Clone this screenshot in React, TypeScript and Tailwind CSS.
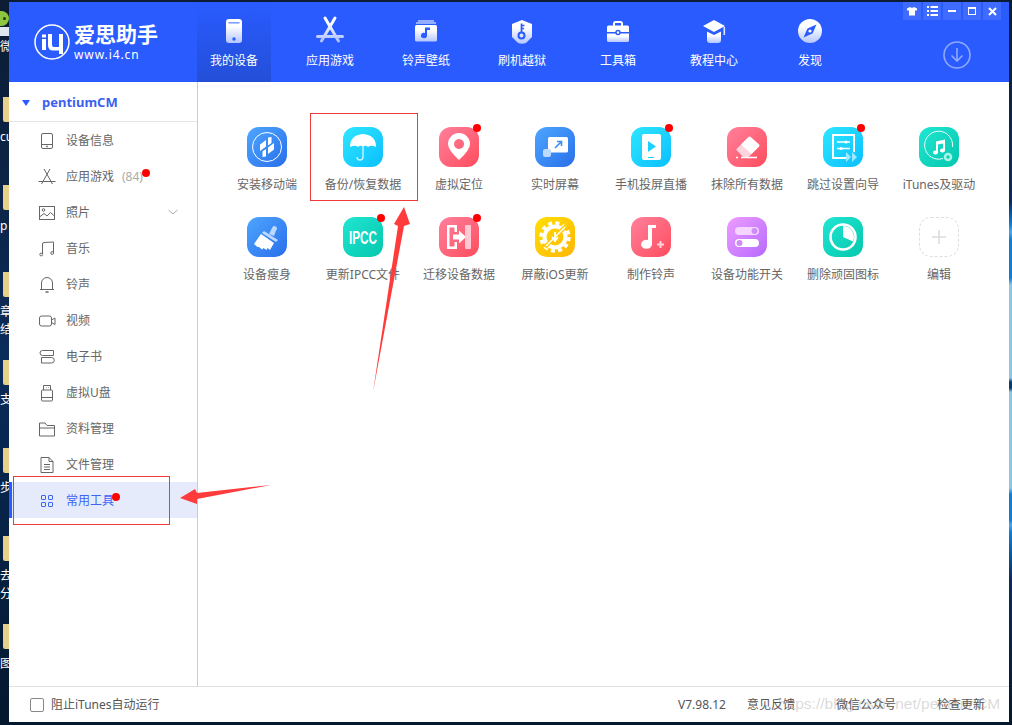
import React from 'react';

const font = { fontFamily: '"Noto Sans", "Noto Sans CJK SC", sans-serif' };

const navItems: { label: string; icon: React.ReactNode }[] = [
  {
    label: '我的设备',
    icon: (
      <>
        <rect x="8" y="4" width="16" height="24" rx="3" fill="url(#navg)" />
        <rect x="10.5" y="7" width="11" height="1.6" fill="#2a5bff" opacity="0.6" />
        <circle cx="16" cy="24" r="1.7" fill="#2a5bff" />
      </>
    ),
  },
  {
    label: '应用游戏',
    icon: (
      <g stroke="url(#navs)" strokeWidth="3" fill="none" strokeLinecap="round">
        <path d="M11 3 L24.5 26" />
        <path d="M21 3 L7.5 26" />
        <path d="M3.5 21.5 H28.5" />
      </g>
    ),
  },
  {
    label: '铃声壁纸',
    icon: (
      <>
        <path d="M8 6 H24 M6 8 H26" stroke="#fff" strokeWidth="1" />
        <rect x="5" y="10" width="22" height="16.5" rx="1.5" fill="url(#navg)" />
        <path d="M17 12.5 V20.5 a3 2.6 0 1 1 -2 -2.4 V12.5 H20 V15 H17z" fill="#2a5bff" />
      </>
    ),
  },
  {
    label: '刷机越狱',
    icon: (
      <>
        <path d="M16 5 L26 9 V22 L20 28 Q16 29.5 12 28 L6 22 V9z" fill="url(#navg)" />
        <circle cx="15.5" cy="20.5" r="3" fill="none" stroke="#2a5bff" strokeWidth="2" />
        <path d="M15.5 17 V8.5 M15.5 10.5 H18.5 M15.5 13.5 H18" stroke="#2a5bff" strokeWidth="1.7" />
      </>
    ),
  },
  {
    label: '工具箱',
    icon: (
      <>
        <path d="M12 11 V8.5 a1.5 1.5 0 0 1 1.5 -1.5 h5 a1.5 1.5 0 0 1 1.5 1.5 V11" fill="none" stroke="#fff" strokeWidth="2" />
        <path d="M5 12 a1.5 1.5 0 0 1 1.5 -1.5 h19 a1.5 1.5 0 0 1 1.5 1.5 V17 H5z" fill="#fff" />
        <path d="M5 18.5 H27 V25.5 a1.5 1.5 0 0 1 -1.5 1.5 h-19 a1.5 1.5 0 0 1 -1.5 -1.5z" fill="url(#navg)" />
        <circle cx="16" cy="17.5" r="2" fill="#fff" stroke="#2a5bff" strokeWidth="1.4" />
      </>
    ),
  },
  {
    label: '教程中心',
    icon: (
      <>
        <path d="M16 5 L27 11 L16 17 L5 11z" fill="#fff" />
        <path d="M9 16.5 L16 20 L23 16.5 V25 Q23 28 20 28 H12 Q9 28 9 25z" fill="url(#navg)" />
        <rect x="25.5" y="12" width="1.6" height="8" fill="#dfe6ff" />
      </>
    ),
  },
  {
    label: '发现',
    icon: (
      <>
        <circle cx="16" cy="16" r="12" fill="url(#navg)" />
        <path d="M22.5 9.5 L18.5 18.5 L9.5 22.5 L13.5 13.5z" fill="#2a5bff" />
        <circle cx="16" cy="16" r="1.6" fill="#fff" />
      </>
    ),
  },
];

const line = { fill: 'none', stroke: 'currentColor', strokeWidth: 1 };

const sideItems: { label: string; icon: React.ReactNode; extra?: React.ReactNode }[] = [
  {
    label: '设备信息',
    icon: (
      <g {...line}>
        <rect x="3.5" y="1.5" width="11" height="15" rx="1.5" />
        <path d="M3.5 12.5 H14.5" />
        <circle cx="9" cy="14.5" r="0.6" />
      </g>
    ),
  },
  {
    label: '应用游戏',
    icon: (
      <g {...line}>
        <path d="M6 1 L14.5 16 M12 1 L3.5 16 M0.5 13.5 H17.5" />
      </g>
    ),
    extra: (
      <>
        <span className="ml-2 text-[#aaaaaa]">(84)</span>
        <span className="absolute left-[133px] top-[11px] w-2 h-2 rounded-full bg-[#ff0000]" />
      </>
    ),
  },
  {
    label: '照片',
    icon: (
      <g {...line}>
        <rect x="1.5" y="2.5" width="15" height="13" />
        <circle cx="5.5" cy="6" r="1.3" />
        <path d="M1.5 13 L6 9.5 L9 12 L12.5 8.5 L16.5 12" />
      </g>
    ),
    extra: (
      <svg className="absolute left-[157px] top-[15px] text-[#aaaaaa]" width="14" height="7" viewBox="0 0 14 7">
        <path d="M2.5 1 L7 5 L11.5 1" {...line} />
      </svg>
    ),
  },
  {
    label: '音乐',
    icon: (
      <g {...line}>
        <path d="M4.5 14 V4 Q4.5 2.5 6 2.5 L15.5 2 V12.5" />
        <circle cx="3.2" cy="14.5" r="1.4" />
        <circle cx="14.2" cy="13" r="1.4" />
      </g>
    ),
  },
  {
    label: '铃声',
    icon: (
      <g {...line}>
        <path d="M3.5 13 V7 a5.5 5.5 0 0 1 11 0 V13" />
        <path d="M2 13.5 H16" />
        <path d="M7.5 16 H10.5" strokeWidth="1.5" />
      </g>
    ),
  },
  {
    label: '视频',
    icon: (
      <g {...line}>
        <rect x="1.5" y="4" width="12" height="10" rx="2" />
        <path d="M13.5 8 L17 6 V12.5 L13.5 10.5" />
      </g>
    ),
  },
  {
    label: '电子书',
    icon: (
      <g {...line}>
        <path d="M15.5 2.5 H4.5 a2.5 2.5 0 0 0 0 5 H15.5 V2.5z" />
        <path d="M3.5 9.5 H13.5 a2.5 2.5 0 0 1 0 5.5 H3.5 V9.5z" />
      </g>
    ),
  },
  {
    label: '虚拟U盘',
    icon: (
      <g {...line}>
        <rect x="3.5" y="6" width="11" height="11" rx="1" />
        <path d="M5.5 6 V1.5 H12.5 V6 M3.5 13.5 H14.5 M8 3.5 H8.5 M10 3.5 H10.5" />
      </g>
    ),
  },
  {
    label: '资料管理',
    icon: (
      <g {...line}>
        <path d="M1.5 3 H7 L9 5.5 H16.5 V16 H1.5z" />
        <path d="M1.5 8 H16.5" />
      </g>
    ),
  },
  {
    label: '文件管理',
    icon: (
      <g {...line}>
        <path d="M3 1.5 H11 L15 5.5 V16.5 H3z" />
        <path d="M11 1.5 V5.5 H15 M6 8.5 H12 M6 11 H12 M6 13.5 H12" />
      </g>
    ),
  },
];

type Tool = { label: string; from: string; to: string; dot?: boolean; icon: React.ReactNode };

const tools: Tool[] = [
  {
    label: '安装移动端',
    from: 'from-[#4fa6ff]',
    to: 'to-[#2a6eea]',
    icon: (
      <>
        <circle cx="20" cy="20" r="14.5" fill="none" stroke="#fff" strokeWidth="1" />
        <path d="M13 17.5 L19 13 V19.5 L13 24z M15.5 24.5 L19 22 V29.5 L15.5 30z" fill="#fff" />
        <path d="M21 10.5 L24.5 10 V16 L21 18.5z M21 20.5 L27 16 V22.5 L21 27z" fill="#fff" />
      </>
    ),
  },
  {
    label: '备份/恢复数据',
    from: 'from-[#2ee6ff]',
    to: 'to-[#08bfff]',
    icon: (
      <>
        <path d="M7 20 Q7 8 20 7 Q33 8 33 20 Q28 17.5 25 20 Q22 17.5 20 20 Q18 17.5 15 20 Q12 17.5 7 20z" fill="#fff" />
        <path d="M20 19 V30 a3 3 0 0 1 -6 0" fill="none" stroke="#c8f3ff" strokeWidth="1.4" />
      </>
    ),
  },
  {
    label: '虚拟定位',
    from: 'from-[#ff7f9c]',
    to: 'to-[#ff4a5c]',
    dot: true,
    icon: (
      <path
        fillRule="evenodd"
        d="M20 33 Q9 23 9 17 a11 11 0 0 1 22 0 Q31 23 20 33z M20 12 a5 5 0 1 0 0.01 0z"
        fill="#fff"
      />
    ),
  },
  {
    label: '实时屏幕',
    from: 'from-[#4fa6ff]',
    to: 'to-[#2a6eea]',
    icon: (
      <>
        <rect x="13" y="10" width="20" height="15.5" rx="1.5" fill="#fff" />
        <path d="M20 21 L26 15 M22 14.5 H26.5 V19" fill="none" stroke="#3d8df5" strokeWidth="1.6" />
        <rect x="8" y="22" width="8" height="8" rx="2" fill="#bcd9ff" />
      </>
    ),
  },
  {
    label: '手机投屏直播',
    from: 'from-[#2ee6ff]',
    to: 'to-[#08bfff]',
    dot: true,
    icon: (
      <>
        <rect x="11" y="7" width="19" height="26" rx="2" fill="#fff" />
        <path d="M17 14 L25 19.5 L17 25z" fill="#1fd0ff" />
        <path d="M17 30.5 H23" stroke="#1fd0ff" strokeWidth="1" />
      </>
    ),
  },
  {
    label: '抹除所有数据',
    from: 'from-[#ff7f9c]',
    to: 'to-[#ff4a5c]',
    icon: (
      <>
        <path d="M9 22.5 L21.5 10 a1.5 1.5 0 0 1 2 0 L32 17.5 a1.5 1.5 0 0 1 0 2 L21.5 30 H16z" fill="#ffd4dc" />
        <path d="M14 17.5 L21.5 10 a1.5 1.5 0 0 1 2 0 L32 17.5 a1.5 1.5 0 0 1 0 2 L24.5 27z" fill="#fff" />
        <path d="M9 30.5 H11 M14 30.5 H30" stroke="#fff" strokeWidth="1.6" />
      </>
    ),
  },
  {
    label: '跳过设置向导',
    from: 'from-[#2ee6ff]',
    to: 'to-[#08bfff]',
    dot: true,
    icon: (
      <>
        <path d="M24 31 H10 V8 H31 V25" fill="none" stroke="#fff" strokeWidth="2" />
        <path d="M14 15 H27 M14 21.5 H27" stroke="#fff" strokeWidth="1.4" />
        <circle cx="23" cy="15" r="1.6" fill="#fff" />
        <circle cx="18" cy="21.5" r="1.6" fill="#fff" />
        <path d="M23 26 L28 31 L23 36z M29 26 L34 31 L29 36z" fill="#9deaff" transform="translate(0,-1)" />
      </>
    ),
  },
  {
    label: 'iTunes及驱动',
    from: 'from-[#1fe6d2]',
    to: 'to-[#03c7ae]',
    icon: (
      <>
        <path d="M24 31.5 A14 14 0 1 1 33.5 20" fill="none" stroke="#fff" strokeWidth="0.9" />
        <path d="M17 14.5 L26 12.5 V23.5 a2.5 2 0 1 1 -2 -2 V16.5 L19 17.5 V25.5 a2.5 2 0 1 1 -2 -2z" fill="#fff" />
        <circle cx="29" cy="30" r="3" fill="none" stroke="#a8f3ea" strokeWidth="2.6" />
      </>
    ),
  },
  {
    label: '设备瘦身',
    from: 'from-[#4fa6ff]',
    to: 'to-[#2a6eea]',
    icon: (
      <>
        <path d="M22 17 L25 11 a2.5 2.5 0 1 1 4 2.5 L27 19z" fill="#bcd9ff" />
        <path d="M17 14 L31 23 L29 25 L15 16z" fill="#bcd9ff" />
        <path d="M14 17 L27 26 L23 33 L20.5 31 L19.5 33 L16.5 31 L15 32.5 L12 30 L10.5 30 L7 27z" fill="#fff" />
      </>
    ),
  },
  {
    label: '更新IPCC文件',
    from: 'from-[#1fe6d2]',
    to: 'to-[#03c7ae]',
    dot: true,
    icon: (
      <text x="20" y="26.5" textAnchor="middle" fontSize="18" fontWeight="700" fill="#fff" textLength="28" lengthAdjust="spacingAndGlyphs" fontFamily="Liberation Sans">
        IPCC
      </text>
    ),
  },
  {
    label: '迁移设备数据',
    from: 'from-[#ff7f9c]',
    to: 'to-[#ff4a5c]',
    dot: true,
    icon: (
      <>
        <path d="M8 8 H18 V15 H15.5 V10.5 H10.5 V29.5 H15.5 V25 H18 V32 H8z" fill="#fff" />
        <path d="M14 17.5 H20 V13.5 L27 20 L20 26.5 V22.5 H14z" fill="#fff" />
        <rect x="26" y="8" width="6" height="24" rx="1" fill="#ffc8d2" />
      </>
    ),
  },
  {
    label: '屏蔽iOS更新',
    from: 'from-[#ffdf00]',
    to: 'to-[#ffb606]',
    icon: (
      <>
        <circle cx="20" cy="20" r="10.5" fill="none" stroke="#fff" strokeWidth="4" />
        <circle cx="20" cy="20" r="14" fill="none" stroke="#fff" strokeWidth="3.4" strokeDasharray="4 3.33" />
        <path d="M10 30 L31 9" stroke="#ffc800" strokeWidth="4" />
        <path d="M11 29 L30 10" stroke="#fff" strokeWidth="1.6" />
        <path d="M20 15 V23 M17 20 L20 24 L23 20" fill="none" stroke="#fff" strokeWidth="1.8" />
      </>
    ),
  },
  {
    label: '制作铃声',
    from: 'from-[#ff7f9c]',
    to: 'to-[#ff4a5c]',
    icon: (
      <>
        <path d="M17 8 H25 V11 H21 V27 a5.5 4.5 0 1 1 -4 -4z" fill="#fff" />
        <path d="M26 27.5 H33 M29.5 24 V31" stroke="#ffd4dc" strokeWidth="2" />
      </>
    ),
  },
  {
    label: '设备功能开关',
    from: 'from-[#ee9dff]',
    to: 'to-[#b767ff]',
    icon: (
      <>
        <rect x="8" y="10" width="24" height="8" rx="4" fill="#f5d5ff" />
        <circle cx="27.5" cy="14" r="3" fill="#cf8bf7" />
        <rect x="8" y="22" width="24" height="8" rx="4" fill="#fff" />
        <circle cx="12.5" cy="26" r="3" fill="#cf8bf7" />
      </>
    ),
  },
  {
    label: '删除顽固图标',
    from: 'from-[#1fe6d2]',
    to: 'to-[#03c7ae]',
    icon: (
      <>
        <circle cx="20" cy="20" r="12.5" fill="none" stroke="#fff" strokeWidth="2.6" />
        <path d="M20 9 A11 11 0 0 1 30 24.5 L20 20z" fill="#fff" />
      </>
    ),
  },
];

const Tile = ({ tool }: { tool: Tool }) => (
  <div className="flex flex-col items-center h-[90px]">
    <div className={`relative w-10 h-10 rounded-[12px] bg-linear-to-br ${tool.from} ${tool.to}`}>
      <svg className="block" width="40" height="40" viewBox="0 0 40 40">
        {tool.icon}
      </svg>
      {tool.dot && <span className="absolute left-[34px] -top-[3px] w-2 h-2 rounded-full bg-[#ff0000]" />}
    </div>
    <span className="mt-[10px] text-xs leading-4 text-[#666666] whitespace-nowrap">{tool.label}</span>
  </div>
);

// scraps of the desktop that stick out left of the window
const desktopBits: [number, string][] = [
  [39, '微'],
  [129, 'cu'],
  [218, 'p'],
  [304, '章'],
  [322, '结'],
  [392, '支'],
  [480, '步'],
  [568, '去'],
  [586, '分'],
  [656, '图'],
];
const folders = [97, 185, 272, 360, 448, 536, 624];

const DesktopEdge = () => (
  <div className="relative w-[9px] shrink-0 h-full">
    <div className="absolute left-0 top-[9px] w-[9px] h-[15px] bg-[#8cc63f] rounded-r-full" />
    <div className="absolute left-[3px] top-[15px] w-[3px] h-[3px] rounded-full bg-[#1f3a10]" />
    <div className="absolute left-0 top-[25px] w-[9px] h-[9px] bg-[#dfe6ee]" />
    {folders.map((y) => (
      <div key={y} className="absolute left-[3px] w-[6px] h-[25px] bg-[#e6d08a] rounded-bl-[2px]" style={{ top: y - 2 }} />
    ))}
    {desktopBits.map(([y, t]) => (
      <span key={y} className="absolute left-0 w-[9px] overflow-hidden text-xs leading-4 text-white" style={{ top: y - 2 }}>
        {t}
      </span>
    ))}
  </div>
);

const WindowButtons = () => (
  <div className="absolute top-0 right-2 flex gap-[2px]">
    <button className="w-[18px] h-[18px] bg-[#3f6cff] flex items-center justify-center">
      <svg width="10" height="10" viewBox="0 0 10 10">
        <path d="M3 1 L5 2 L7 1 L10 2.5 V4.5 L8 4.5 V9.5 H2 V4.5 L0 4.5 V2.5z" fill="#fff" />
      </svg>
    </button>
    <button className="w-[18px] h-[18px] bg-[#3f6cff] flex items-center justify-center">
      <svg width="11" height="10" viewBox="0 0 11 10">
        <path d="M0 1 H2 M3.5 1 H11 M0 5 H2 M3.5 5 H11 M0 9 H2 M3.5 9 H11" stroke="#fff" strokeWidth="2" />
      </svg>
    </button>
    <button className="w-[18px] h-[18px] bg-[#3f6cff] flex items-center justify-center">
      <span className="block w-[8px] h-[2px] bg-white" />
    </button>
    <button className="w-[18px] h-[18px] bg-[#3f6cff] flex items-center justify-center">
      <span className="block w-[8px] h-[8px] border border-white border-t-2" />
    </button>
    <button className="w-[18px] h-[18px] bg-[#3f6cff] flex items-center justify-center">
      <svg width="9" height="9" viewBox="0 0 9 9">
        <path d="M1 1 L8 8 M8 1 L1 8" stroke="#fff" strokeWidth="2" />
      </svg>
    </button>
  </div>
);

const Header = () => (
  <header className="relative flex h-20 bg-[#2a5bff] shrink-0">
    <div className="w-[177px] shrink-0 flex items-start pt-[22px] pl-[25px]">
      <svg width="36" height="36" viewBox="0 0 36 36" className="shrink-0">
        <circle cx="18" cy="18" r="17" fill="none" stroke="#fff" strokeWidth="1.5" />
        <path d="M8 10.5 H12 V13.5 H8z M8 15 H12 V26 H8z" fill="#fff" />
        <path d="M14 10 H18 V21 Q18 23 20 23 H25 V10 H29 V30 H25 V26.5 H19 Q14 26.5 14 21z" fill="#fff" />
      </svg>
      <div className="ml-[4px] -mt-[3px] text-white flex flex-col">
        <span className="text-[21px] leading-[26px] font-bold whitespace-nowrap">爱思助手</span>
        <span className="text-xs leading-[14px] tracking-[0.9px] mt-[1px]">www.i4.cn</span>
      </div>
    </div>
    {navItems.map((item, i) => (
      <div key={item.label} className="w-24 h-20 flex justify-center">
        <div
          className={`w-[74px] h-20 pt-[13px] flex flex-col items-center text-white ${
            i === 0 ? 'bg-linear-to-b from-[#2a5bff] to-[#234fd8]' : ''
          }`}
        >
          <svg width="32" height="32" viewBox="0 0 32 32">
            {item.icon}
          </svg>
          <span className="mt-[6px] text-xs leading-4 whitespace-nowrap">{item.label}</span>
        </div>
      </div>
    ))}
    <div className="flex-1 flex justify-end pr-[38px] pt-[39px]">
      <svg width="28" height="28" viewBox="0 0 28 28" className="text-[#8fa9ff]">
        <circle cx="14" cy="14" r="13" fill="none" stroke="currentColor" strokeWidth="1.6" />
        <path d="M14 7 V20 M8.5 14.5 L14 20 L19.5 14.5" fill="none" stroke="currentColor" strokeWidth="1.6" />
      </svg>
    </div>
    <WindowButtons />
  </header>
);

const Sidebar = () => (
  <aside className="w-[189px] shrink-0 border-r border-[#cccccc] flex flex-col">
    <div className="h-10 flex items-center border-b border-[#e5e5e5] pl-[13px] pt-[2px] shrink-0">
      <span className="w-0 h-0 border-x-[4px] border-x-transparent border-t-[6px] border-t-[#2a5bff]" />
      <span className="ml-[12px] text-[13px] font-bold text-[#3d5ff0]">pentiumCM</span>
    </div>
    {sideItems.map((item) => (
      <div key={item.label} className="relative h-9 flex items-center pl-[29px] pt-[2px] text-xs text-[#666666]">
        <svg width="18" height="18" viewBox="0 0 18 18">
          {item.icon}
        </svg>
        <span className="ml-[10px] whitespace-nowrap">{item.label}</span>
        {item.extra}
      </div>
    ))}
    <div className="relative h-9 flex items-center pl-[26px] pt-[2px] text-xs text-[#3d64f5] bg-[#e6ebfc] border-l-[3px] border-[#2a5bff]">
      <svg width="18" height="18" viewBox="0 0 18 18" fill="none" stroke="currentColor">
        <rect x="3.5" y="3.5" width="4" height="4" rx="0.5" />
        <rect x="10.5" y="3.5" width="4" height="4" rx="0.5" />
        <rect x="3.5" y="10.5" width="4" height="4" rx="0.5" />
        <rect x="10.5" y="10.5" width="4" height="4" rx="0.5" />
      </svg>
      <span className="ml-[10px] whitespace-nowrap">常用工具</span>
      <span className="absolute left-[100px] top-[11px] w-2 h-2 rounded-full bg-[#ff0000]" />
    </div>
  </aside>
);

const Content = () => (
  <main className="flex-1 pt-[45px] pl-[21px]">
    <div className="grid grid-cols-[repeat(8,96px)]">
      {tools.map((t) => (
        <Tile key={t.label} tool={t} />
      ))}
      <div className="flex flex-col items-center h-[90px]">
        <div className="w-10 h-10 rounded-[12px] border border-dashed border-[#dddddd] flex items-center justify-center">
          <svg width="14" height="14" viewBox="0 0 14 14">
            <path d="M7 0 V14 M0 7 H14" stroke="#dddddd" strokeWidth="1.6" />
          </svg>
        </div>
        <span className="mt-[10px] text-xs leading-4 text-[#666666]">编辑</span>
      </div>
    </div>
  </main>
);

const Footer = () => (
  <footer className="h-9 shrink-0 border-t border-[#e0e0e0] flex items-center text-xs text-[#555555]">
    <span className="ml-[21px] w-[14px] h-[14px] rounded-[2px] border border-[#888888]" />
    <span className="ml-[7px] whitespace-nowrap">阻止iTunes自动运行</span>
    <span className="ml-auto whitespace-nowrap">V7.98.12</span>
    <span className="ml-[21px] whitespace-nowrap">意见反馈</span>
    <span className="ml-[41px] whitespace-nowrap">微信公众号</span>
    <span className="ml-[41px] mr-[24px] whitespace-nowrap">检查更新</span>
  </footer>
);

// the red marks someone drew on the screenshot, and the blog watermark
const Annotations = () => (
  <>
    <div className="absolute left-[310px] top-[113px] w-[108px] h-[88px] border border-[#f0393b]" />
    <div className="absolute left-[13px] top-[476px] w-[157px] h-[49px] border border-[#f0393b]" />
    <svg className="absolute left-0 top-0 pointer-events-none" width="1012" height="725">
      <polygon points="373,392 398,226 394,224 404,207 410,224 404,226" fill="#ff3b3b" />
      <polygon points="271,485 197,493 195,489 180,498 197,504 197,499" fill="#ff3b3b" />
    </svg>
    <span className="absolute left-[778px] top-[693px] font-['Liberation_Sans'] text-[15.5px] leading-[22px] text-[#808080]/30 whitespace-nowrap pointer-events-none">
      https://blog.csdn.net/pentiumCM
    </span>
  </>
);

const App: React.FC = () => {
  return (
    <div className="relative w-[1012px] h-[725px] overflow-hidden bg-linear-to-b from-[#0c1c33] via-[#0a2c5a] to-[#04182e] flex pt-[2px] pb-[3px]" style={font}>
      <svg width="0" height="0" className="absolute">
        <defs>
          <linearGradient id="navg" x1="0" y1="0" x2="0" y2="1">
            <stop offset="0.3" stopColor="#ffffff" />
            <stop offset="1" stopColor="#b4c6ff" />
          </linearGradient>
          <linearGradient id="navs" gradientUnits="userSpaceOnUse" x1="0" y1="3" x2="0" y2="27">
            <stop offset="0.2" stopColor="#ffffff" />
            <stop offset="1" stopColor="#a9bdff" />
          </linearGradient>
        </defs>
      </svg>
      <DesktopEdge />
      <div className="w-[1000px] shrink-0 bg-white flex flex-col">
        <Header />
        <div className="flex-1 flex min-h-0">
          <Sidebar />
          <Content />
        </div>
        <Footer />
      </div>
      <div className="w-[3px] shrink-0 bg-[linear-gradient(to_bottom,#0c1c33_0,#0a2c5a_200px,#0d7fd8_222px,#4aa8e8_230px,#0d7fd8_238px,#0d7fd8_276px,#8fc4e4_283px,#8fc4e4_376px,#0a3c6e_380px,#0a3c6e_386px,#8fc4e4_390px,#8fc4e4_486px,#0d7fd8_492px,#0d7fd8_518px,#4aa8e8_523px,#0d7fd8_530px,#0a2c5a_578px,#04182e_720px)]" />
      <Annotations />
    </div>
  );
};

export default App;
